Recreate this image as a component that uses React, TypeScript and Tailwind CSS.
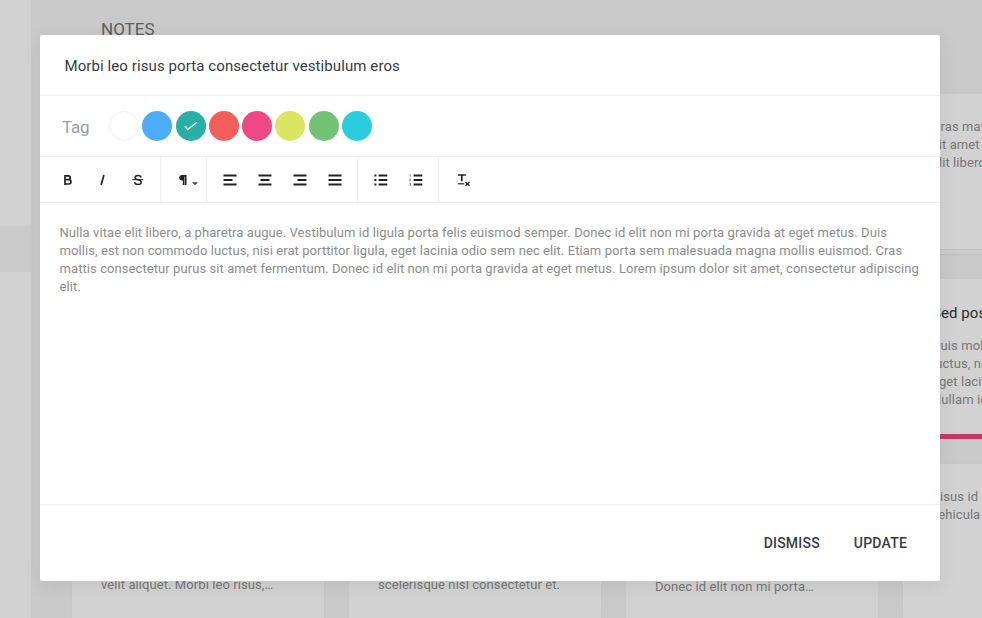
import type { ReactNode } from 'react';

const tags = [
  'bg-white border border-[#f0f0f0]',
  'bg-[#4bacf7]',
  'bg-[#2aafa4]',
  'bg-[#f25e5a]',
  'bg-[#ef4885]',
  'bg-[#dbe561]',
  'bg-[#72c375]',
  'bg-[#2acde0]',
];

function Card({ className, children }: { className: string; children?: ReactNode }) {
  return (
    <div className={`flex w-[252px] shrink-0 flex-col rounded-[2px] bg-[#d2d2d2] px-[29px] text-[13px] leading-[18px] tracking-[0.08px] whitespace-nowrap text-[#777777] shadow-[0_0_1px_#b4b4b4] ${className}`}>
      {children}
    </div>
  );
}

function Lines({ d }: { d: string }) {
  return (
    <svg width="14" height="12" viewBox="0 0 14 12" fill="none" stroke="#222222" strokeWidth="2">
      <path d={d} />
    </svg>
  );
}

function Tool({ className = '', children }: { className?: string; children: ReactNode }) {
  return <button className={`flex h-full w-[35px] shrink-0 items-center justify-center ${className}`}>{children}</button>;
}

function Background() {
  return (
    <div className="flex h-full w-full bg-[#c9c9c9]">
      <aside className="flex w-[31px] shrink-0 flex-col bg-[#d2d2d2] pt-[226px]">
        <div className="h-[46px] shrink-0 bg-[#cbcbcb]" />
      </aside>
      <main className="flex w-[1150px] shrink-0 flex-col pl-[41px]">
        <h1 className="h-[94px] shrink-0 pt-[19px] pl-[29px] text-[17px] leading-5 text-[#5e5e5e]">NOTES</h1>
        <div className="flex shrink-0 items-start gap-[25px]">
          <Card className="h-[530px] justify-end pb-[30px]">
            <p>velit aliquet. Morbi leo risus,…</p>
          </Card>
          <Card className="h-[530px] justify-end pb-[30px]">
            <p>scelerisque nisl consectetur et.</p>
          </Card>
          <Card className="h-[530px] justify-end pb-[28px]">
            <p>Donec id elit non mi porta…</p>
          </Card>
          <div className="flex flex-col">
            <Card className="h-[161px] pt-[24px]">
              <p>Cras mattis consectetur<br />sit amet fermentum<br />elit libero, a pharetra</p>
              <div className="-mx-[29px] mt-auto h-[6px] border-t border-b border-[#bebebe] bg-[#cccccc]" />
            </Card>
            <Card className="mt-[24px] h-[160px] pt-[24px]">
              <h2 className="text-[15px] leading-5 text-[#292d32]">Sed posuere consectetur</h2>
              <p className="mt-[14px]">Duis mollis, est non<br />luctus, nisi erat porttitor<br />eget lacinia odio sem<br />Nullam id dolor id</p>
              <div className="-mx-[29px] mt-auto h-[5px] bg-[#ca3668]" />
            </Card>
            <Card className="mt-[25px] h-[180px] pt-[24px]">
              <p>Risus id ligula porta<br />vehicula ut id elit</p>
            </Card>
          </div>
        </div>
      </main>
    </div>
  );
}

function Toolbar() {
  return (
    <div className="flex h-[46px] shrink-0 border-b border-[#eeeeee]">
      <div className="flex w-[121px] border-r border-[#eeeeee] pl-[10px] text-[#222222]">
        <Tool>
          <svg width="10" height="12" viewBox="0 0 10 12" fill="none" stroke="currentColor" strokeWidth="1.7">
            <path d="M2 1.9h3.4a1.9 1.9 0 0 1 0 3.8H2m0 0h3.8a2.15 2.15 0 0 1 0 4.3H2zM2 1v9.9" />
          </svg>
        </Tool>
        <Tool>
          <svg width="10" height="12" viewBox="0 0 10 12" fill="none" stroke="currentColor" strokeWidth="1.7">
            <path d="M5.9 1 3.1 11" />
          </svg>
        </Tool>
        <Tool>
          <svg width="12" height="12" viewBox="0 0 12 12" fill="none" stroke="currentColor" strokeWidth="1.4">
            <path d="M9.1 3.6C8.9 2.2 7.7 1.5 6 1.5S3 2.3 3 3.7s1.3 1.7 3 2c2 .4 3.2.9 3.2 2.5 0 1.4-1.3 2.2-3.2 2.2-2 0-3.2-.8-3.3-2.3" />
            <path d="M.3 5.7h11" strokeWidth="1" />
          </svg>
        </Tool>
      </div>
      <div className="flex w-[46px] items-center gap-[4px] border-r border-[#eeeeee] pl-[18px] text-[#222222]">
        <svg width="9" height="12" viewBox="0 0 9 12" fill="currentColor">
          <path d="M3 1h4.5v10H6V2.4h-.5V11H3.8V6.5H3A2.7 2.7 0 0 1 3 1z" />
        </svg>
        <svg className="mt-[8px]" width="6" height="4" viewBox="0 0 6 4" fill="#444444"><path d="M0 .3h6L3 3.2z" /></svg>
      </div>
      <div className="flex w-[151px] border-r border-[#eeeeee] pl-[5px]">
        <Tool><Lines d="M.5 1.5h13M.5 6h9M.5 10.5h13" /></Tool>
        <Tool><Lines d="M.5 1.5h13M2.5 6h9M.5 10.5h13" /></Tool>
        <Tool><Lines d="M.5 1.5h13M4.5 6h9M.5 10.5h13" /></Tool>
        <Tool><Lines d="M.5 1.5h13M.5 6h13M.5 10.5h13" /></Tool>
      </div>
      <div className="flex w-[81px] border-r border-[#eeeeee] pl-[5px]">
        <Tool><Lines d="M.4 1.5h2M.4 6h2M.4 10.5h2M4.6 1.5h8.7M4.6 6h8.7M4.6 10.5h8.7" /></Tool>
        <Tool>
          <svg width="14" height="12" viewBox="0 0 14 12" fill="none" stroke="#222222" strokeWidth="2">
            <path d="M4.6 1.5h8.7M4.6 6h8.7M4.6 10.5h8.7" />
            <path d="M.4.8h1v2M.4 5h1.3L.5 6.8h1.4M.4 9.4h1.2v2H.4M.8 10.4h.8" strokeWidth=".75" stroke="#666666" />
          </svg>
        </Tool>
      </div>
      <Tool className="ml-[7px]">
        <svg className="mt-[1px]" width="14" height="14" viewBox="0 0 14 14" fill="none" stroke="#222222">
          <path d="M.8 2h8M4.8 2v6.3" strokeWidth="1.7" />
          <path d="M1 10.8h6.2" strokeWidth="1.2" />
          <path d="m8.5 9 4 3.7m0-3.7-4 3.7" strokeWidth="1.4" />
        </svg>
      </Tool>
    </div>
  );
}

export default function App() {
  return (
    <div className="relative h-[618px] w-[982px] overflow-hidden font-['Roboto',sans-serif]">
      <Background />
      <section className="absolute top-[35px] left-[40px] flex h-[546px] w-[900px] flex-col rounded-[2px] bg-white shadow-[0_4px_20px_rgba(0,0,0,0.07)]">
        <header className="flex h-[61px] shrink-0 items-center border-b border-[#eeeeee] pt-[2px] pl-[24.5px] text-[15px] tracking-[0.09px] text-[#343c44]">
          Morbi leo risus porta consectetur vestibulum eros
        </header>
        <div className="flex h-[61px] shrink-0 items-center border-b border-[#eeeeee] pl-[22px]">
          <span className="w-[47px] pt-[3px] text-[17px] tracking-[-0.2px] text-[#9e9e9e]">Tag</span>
          <div className="flex gap-[3.3px]">
            {tags.map((tag, index) => (
              <button key={tag} className={`flex h-[30px] w-[30px] items-center justify-center rounded-full ${tag}`}>
                {index === 2 && (
                  <svg width="14" height="10" viewBox="0 0 14 10" fill="none" stroke="white" strokeWidth="1.3"><path d="m.8 5.3 2.8 3.2L13 1.2" /></svg>
                )}
              </button>
            ))}
          </div>
        </div>
        <Toolbar />
        <p className="min-h-0 flex-1 pt-[21px] pl-[19.5px] text-[13px] leading-[18px] tracking-[0.08px] whitespace-nowrap text-[#8d8d8d]">
          Nulla vitae elit libero, a pharetra augue. Vestibulum id ligula porta felis euismod semper. Donec id elit non mi porta gravida at eget metus. Duis<br />
          mollis, est non commodo luctus, nisi erat porttitor ligula, eget lacinia odio sem nec elit. Etiam porta sem malesuada magna mollis euismod. Cras<br />
          mattis consectetur purus sit amet fermentum. Donec id elit non mi porta gravida at eget metus. Lorem ipsum dolor sit amet, consectetur adipiscing<br />
          elit.
        </p>
        <footer className="flex h-[77px] shrink-0 items-center justify-end gap-[34px] border-t border-[#eeeeee] pr-[33px] text-[14px] font-medium tracking-[0.2px] text-[#363e45]">
          <button>DISMISS</button>
          <button>UPDATE</button>
        </footer>
      </section>
    </div>
  );
}
